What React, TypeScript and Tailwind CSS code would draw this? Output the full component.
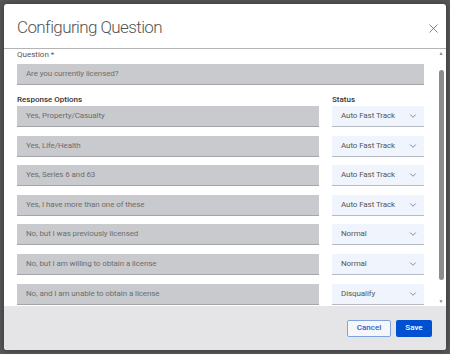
import { ChevronDown, X } from 'lucide-react';

const options = [
  { label: 'Yes, Property/Casualty', status: 'Auto Fast Track' },
  { label: 'Yes, Life/Health', status: 'Auto Fast Track' },
  { label: 'Yes, Series 6 and 63', status: 'Auto Fast Track' },
  { label: 'Yes, I have more than one of these', status: 'Auto Fast Track' },
  { label: 'No, but I was previously licensed', status: 'Normal' },
  { label: 'No, but I am willing to obtain a license', status: 'Normal' },
  { label: 'No, and I am unable to obtain a license', status: 'Disqualify' },
];

function Field({ text }: { text: string }) {
  return (
    <div className="h-[21px] bg-[#c9cacd] border-b border-[#a4a5a8] pl-[9px] flex items-center text-[8px] tracking-[-0.1px] text-[#6e6e6e] truncate">
      {text}
    </div>
  );
}

function StatusSelect({ value }: { value: string }) {
  return (
    <div className="h-[21px] bg-[#f0f5fd] border-b border-[#b6bac2] pl-[9px] pr-[6px] flex items-center justify-between text-[8px] tracking-[-0.1px] text-[#555]">
      <span>{value}</span>
      <ChevronDown className="w-[10px] h-[10px] text-[#3a5a9c]" strokeWidth={1.6} />
    </div>
  );
}

export default function App() {
  return (
    <div
      className="w-[450px] h-[354px] bg-[#575757] p-[4px] overflow-hidden"
      style={{ fontFamily: 'Roboto, "Liberation Sans", sans-serif' }}
    >
      <div className="h-full flex flex-col bg-white rounded-[3px] overflow-hidden shadow-[0_0_6px_rgba(0,0,0,0.4)]">
        {/* Header */}
        <header className="h-[45px] shrink-0 flex items-center justify-between pt-[4px] pl-[13px] pr-[3px] border-b border-[#b4b4b4]">
          <h1 className="text-[17px] font-light text-[#555] tracking-[-0.6px]">Configuring Question</h1>
          <button className="p-[2px] text-[#666]" aria-label="Close">
            <X className="w-[15px] h-[15px]" strokeWidth={1.3} />
          </button>
        </header>

        {/* Body */}
        <div className="flex-1 min-h-0 flex">
          <div className="flex-1 min-w-0 overflow-hidden pl-[13px] pr-[13px] pt-[1px]">
            <p className="h-[10px] leading-[10px] text-[8px] text-[#555]">Question *</p>
            <div className="mt-[4px]">
              <Field text="Are you currently licensed?" />
            </div>
            <div className="mt-[10px] grid grid-cols-[1fr_92px] gap-x-[13px] h-[10px] leading-[10px] text-[8px] font-medium text-[#333]">
              <span>Response Options</span>
              <span>Status</span>
            </div>
            <div className="mt-[1px] flex flex-col gap-[8.6px]">
              {options.map((o) => (
                <div key={o.label} className="grid grid-cols-[1fr_92px] gap-x-[13px]">
                  <Field text={o.label} />
                  <StatusSelect value={o.status} />
                </div>
              ))}
            </div>
          </div>
          {/* Scrollbar */}
          <div className="w-[9px] shrink-0 flex flex-col items-center pt-[1px] pb-[2px] pr-[1px]">
            <span className="text-[5px] leading-[6px] text-[#888]">▲</span>
            <div className="flex-1 w-full flex flex-col items-center pt-[14px] pb-[18px]">
              <div className="w-[5px] flex-1 rounded-full bg-[#8c8c8c]" />
            </div>
            <span className="text-[5px] leading-[6px] text-[#888]">▼</span>
          </div>
        </div>

        {/* Footer */}
        <footer className="h-[44px] shrink-0 bg-[#e5e5e7] flex items-center justify-end gap-[5px] pr-[14px]">
          <button className="h-[17px] w-[44px] rounded-[2px] border border-[#7fa2e2] bg-[#f5f7fb] text-[8px] font-medium text-[#2b5fd6]">
            Cancel
          </button>
          <button className="h-[17px] w-[36px] rounded-[2px] bg-[#0050d2] text-[8px] font-medium text-white">
            Save
          </button>
        </footer>
      </div>
    </div>
  );
}
